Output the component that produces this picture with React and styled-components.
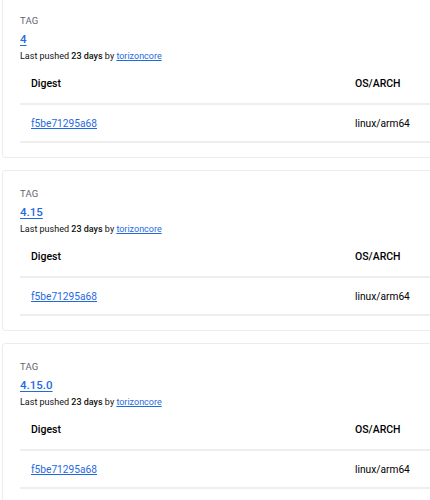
import React from 'react'
import styled, { createGlobalStyle } from 'styled-components'

const GlobalStyle = createGlobalStyle`
  body {
    margin: 0;
    background: #ffffff;
    font-family: Roboto, "Liberation Sans", sans-serif;
    overflow: hidden;
  }
`

const Page = styled.div`
  display: flex;
  flex-direction: column;
  gap: 12px;
  padding-left: 2px;
  margin-top: -3px;
  width: 460px;
`

const Card = styled.div`
  border: 1px solid #ececec;
  border-radius: 3px;
  background: #ffffff;
  padding: 16px 0 14px 17px;
`

const Label = styled.div`
  font-size: 9.5px;
  line-height: 14px;
  color: #5f6673;
  letter-spacing: 0.1px;
`

const TagLink = styled.a`
  display: inline-block;
  font-size: 11.5px;
  line-height: 16px;
  font-weight: 500;
  color: #1f6ae0;
  text-decoration: underline;
  text-underline-offset: 2px;
`

const Meta = styled.div`
  margin-top: 2px;
  font-size: 9px;
  line-height: 14px;
  color: #111111;

  b {
    font-weight: 500;
  }

  a {
    color: #1f6ae0;
    text-decoration: underline;
  }
`

const Table = styled.div`
  display: flex;
  flex-direction: column;
`

const Row = styled.div`
  display: grid;
  grid-template-columns: 324px 1fr;
  align-items: center;
  height: ${(p) => (p.head ? '40px' : '36px')};
  border-bottom: 2px solid #eeeeee;
  font-size: ${(p) => (p.head ? '10.5px' : '10.2px')};
  font-weight: ${(p) => (p.head ? 500 : 400)};
  color: #000000;
`

const Cell = styled.div`
  padding-left: 11px;
`

const DigestLink = styled.a`
  color: #1f6ae0;
  text-decoration: underline;
`

const tags = ['4', '4.15', '4.15.0']

const TagCard = ({ name }) => (
  <Card>
    <Label>TAG</Label>
    <TagLink href="#">{name}</TagLink>
    <Meta>
      Last pushed <b>23 days</b> by <a href="#">torizoncore</a>
    </Meta>
    <Table>
      <Row head>
        <Cell>Digest</Cell>
        <Cell>OS/ARCH</Cell>
      </Row>
      <Row>
        <Cell>
          <DigestLink href="#">f5be71295a68</DigestLink>
        </Cell>
        <Cell>linux/arm64</Cell>
      </Row>
    </Table>
  </Card>
)

const App = () => (
  <>
    <GlobalStyle />
    <Page>
      {tags.map((t) => (
        <TagCard key={t} name={t} />
      ))}
    </Page>
  </>
)

export default App
